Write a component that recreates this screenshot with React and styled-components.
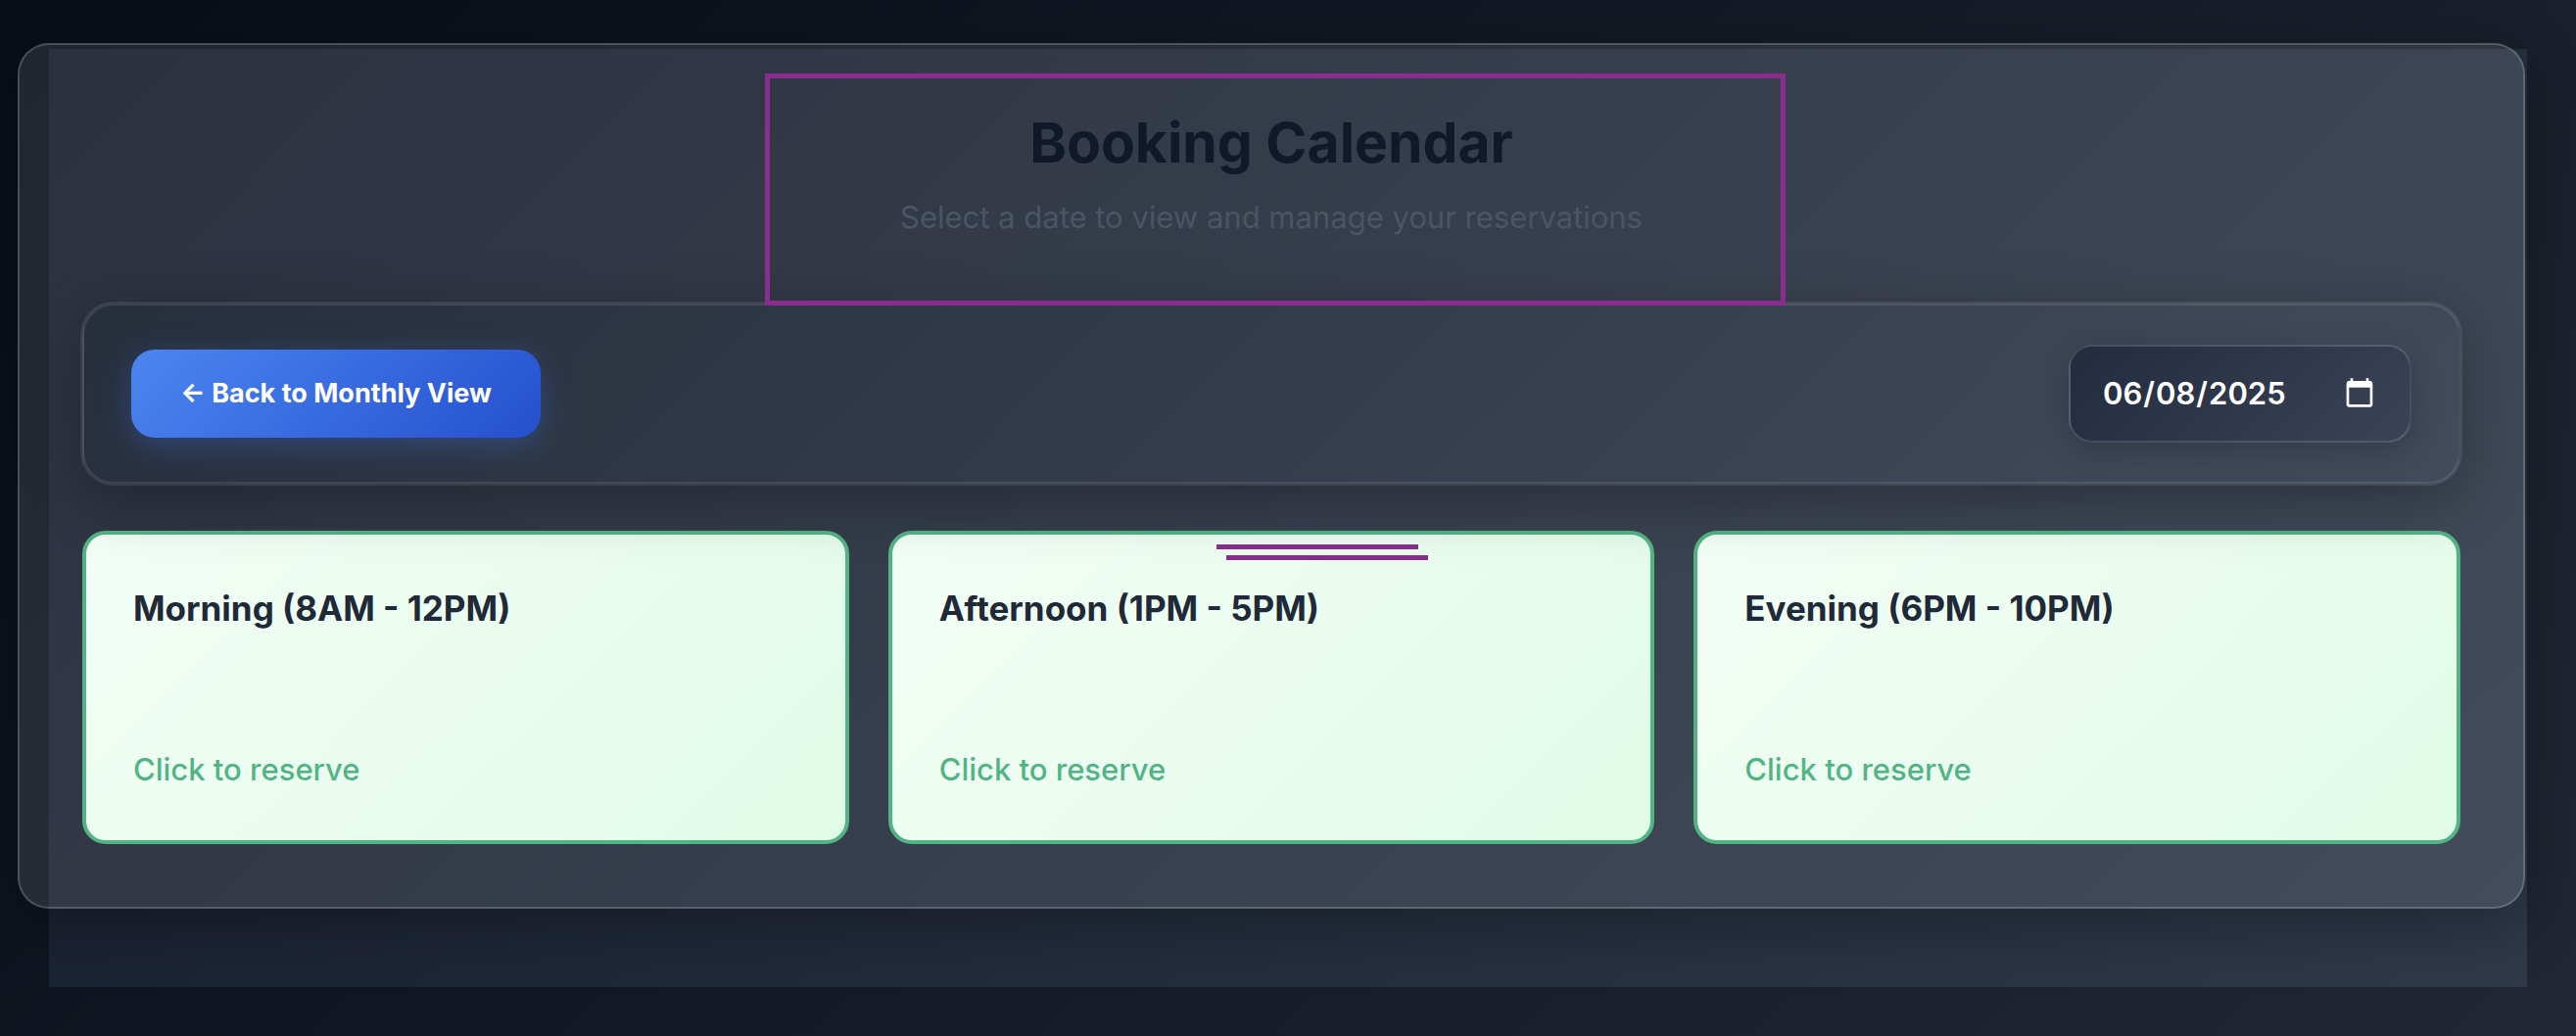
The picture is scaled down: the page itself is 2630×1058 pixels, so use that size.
import React, { useState } from "react";
import styled, { createGlobalStyle } from "styled-components";

const GlobalStyle = createGlobalStyle`
  *, *::before, *::after { box-sizing: border-box; }
  body {
    margin: 0;
    min-height: 100vh;
    background: linear-gradient(135deg, #080d18 0%, #212733 100%);
    font-family: Inter, "Liberation Sans", sans-serif;
  }
`;

const Page = styled.div`
  display: flow-root;
  min-height: 100vh;
  padding: 50px;
`;

const Section = styled.main`
  display: flow-root;
  background: linear-gradient(135deg, #141a2a 0%, #2f394a 100%);
`;

const Panel = styled.div`
  margin: -6px 2px 80px -32px;
  padding: 64px;
  border: 2px solid rgba(255, 255, 255, 0.18);
  border-radius: 32px;
  background: rgba(255, 255, 255, 0.1);
  box-shadow: 0 16px 64px rgba(0, 0, 0, 0.3);
`;

const Header = styled.header`
  position: relative;
  z-index: 3;
  display: flex;
  flex-direction: column;
  align-items: center;
  gap: 16px;
  padding-bottom: 64px;
`;

const Outline = styled.div`
  position: absolute;
  top: -35px;
  bottom: -2px;
  left: calc(50% - 517px);
  width: 1042px;
  border: 5px solid #892d8e;
  pointer-events: none;
`;

const Title = styled.h1`
  margin: 0;
  color: #111827;
  font-size: 57px;
  line-height: 72px;
  font-weight: 700;
`;

const Subtitle = styled.p`
  margin: 0;
  color: #4b5563;
  font-size: 31px;
  line-height: 48px;
`;

const Toolbar = styled.div`
  position: relative;
  z-index: 2;
  display: flex;
  align-items: center;
  justify-content: space-between;
  padding: 40px 48px;
  border: 2px solid rgba(255, 255, 255, 0.1);
  border-radius: 32px;
  background: linear-gradient(135deg, rgba(31, 41, 55, 0.4), rgba(75, 85, 105, 0.3));
  box-shadow:
    0 0 0 2px rgba(255, 255, 255, 0.09),
    0 16px 64px rgba(0, 0, 0, 0.3);
`;

const BackButton = styled.button`
  height: 90px;
  padding: 0 48px;
  border: 2px solid transparent;
  border-radius: 24px;
  background: linear-gradient(135deg, #4c86f0, #2550cf) border-box;
  box-shadow: 0 8px 32px rgba(59, 130, 246, 0.3);
  color: #fff;
  font: 700 27px/42px Inter, "Liberation Sans", sans-serif;
  cursor: pointer;
`;

const DateInput = styled.input`
  width: 350px;
  height: 100px;
  padding: 0 32px;
  border: 2px solid rgba(255, 255, 255, 0.15);
  border-radius: 24px;
  background: linear-gradient(135deg, #232c3e, #3a4456);
  box-shadow: 0 8px 32px rgba(0, 0, 0, 0.2);
  color: #fff;
  color-scheme: dark;
  font: 600 31px/48px Inter, "Liberation Sans", sans-serif;

  &::-webkit-calendar-picker-indicator {
    width: 34px;
    height: 34px;
  }
`;

const Slots = styled.div`
  display: grid;
  grid-template-columns: repeat(3, 1fr);
  gap: 40px;
  margin-top: 48px;
`;

const Slot = styled.button`
  position: relative;
  display: flex;
  flex-direction: column;
  justify-content: space-between;
  align-items: flex-start;
  min-height: 320px;
  padding: 48px;
  border: 4px solid #52b485;
  border-radius: 24px;
  background: linear-gradient(135deg, #f3fef6, #e0fbe8);
  font-family: inherit;
  text-align: left;
  cursor: pointer;
`;

const SlotName = styled.span`
  color: #1f2937;
  font-size: 35px;
  line-height: 54px;
  font-weight: 700;
`;

const SlotAction = styled.span`
  color: #52b485;
  font-size: 31px;
  line-height: 48px;
  font-weight: 500;
`;

const Marks = styled.span`
  position: absolute;
  top: 10px;
  left: calc(50% - 56px);
  display: flex;
  flex-direction: column;
  gap: 6px;
`;

const Mark = styled.span`
  width: 206px;
  height: 5px;
  margin-left: ${(p) => (p.$shifted ? "10px" : "0")};
  background: #892d8e;
`;

const slots = [
  { name: "Morning (8AM - 12PM)" },
  { name: "Afternoon (1PM - 5PM)", marked: true },
  { name: "Evening (6PM - 10PM)" },
];

export default function App() {
  const [date, setDate] = useState("2025-06-08");
  return (
    <>
      <GlobalStyle />
      <Page>
        <Section>
          <Panel>
            <Header>
              <Title>Booking Calendar</Title>
              <Subtitle>Select a date to view and manage your reservations</Subtitle>
              <Outline />
            </Header>
            <Toolbar>
              <BackButton type="button">← Back to Monthly View</BackButton>
              <DateInput
                type="date"
                aria-label="Date"
                value={date}
                onChange={(e) => setDate(e.target.value)}
              />
            </Toolbar>
            <Slots>
              {slots.map((slot) => (
                <Slot type="button" key={slot.name}>
                  {slot.marked && (
                    <Marks>
                      <Mark />
                      <Mark $shifted />
                    </Marks>
                  )}
                  <SlotName>{slot.name}</SlotName>
                  <SlotAction>Click to reserve</SlotAction>
                </Slot>
              ))}
            </Slots>
          </Panel>
        </Section>
      </Page>
    </>
  );
}
